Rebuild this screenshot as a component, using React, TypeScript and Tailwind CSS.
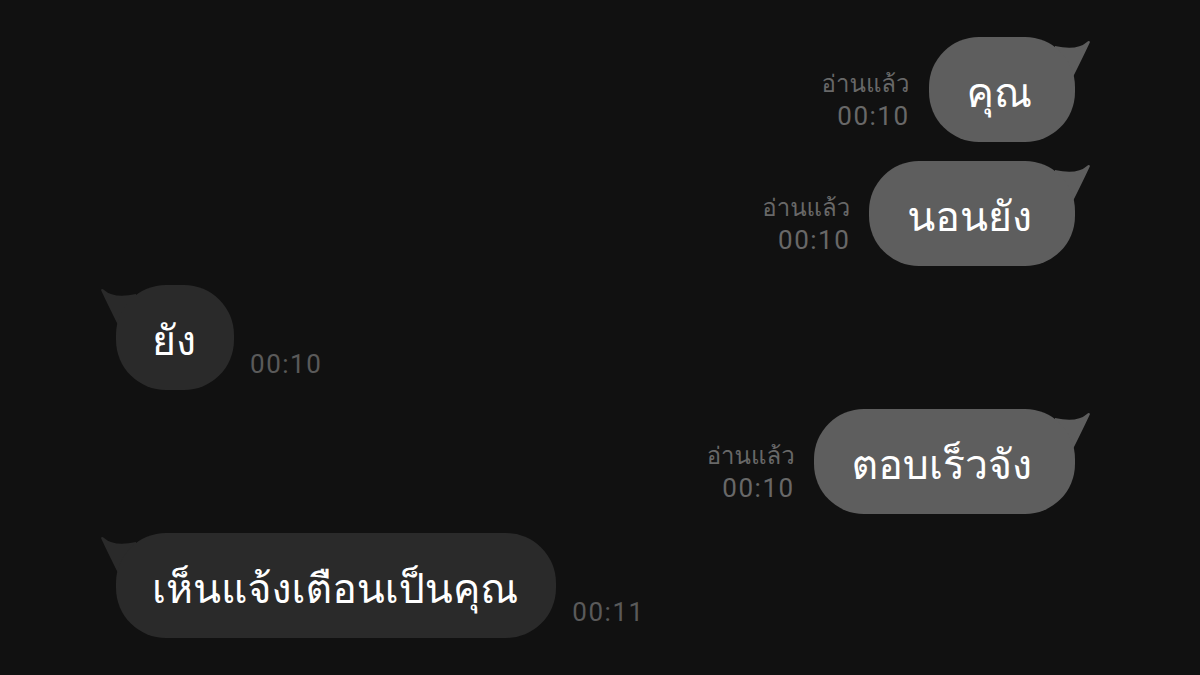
const Tail = ({ side, color }: { side: "left" | "right"; color: string }) => {
  const right = side === "right";
  return (
    <svg
      className={right ? "absolute -right-[16px] top-0" : "absolute -left-[16px] top-0"}
      width="36"
      height="40"
      viewBox="0 0 36 40"
      style={right ? undefined : { transform: "scaleX(-1)" }}
    >
      <path d="M0 9 Q22 14 32 5 Q34 3 35 5 Q30 16 18 40 L0 40 Z" fill={color} />
    </svg>
  );
};

const digits = { fontFamily: "Roboto, Garuda, sans-serif" };

const Out = ({ text, time }: { text: string; time: string }) => (
  <div className="flex items-end justify-end gap-[19px]">
    <div className="mb-[10px] flex flex-col items-end text-[#686868]">
      <span className="text-[24px] leading-[28px]">อ่านแล้ว</span>
      <span className="mt-[2px] text-[26px] leading-[32px] tracking-[1.5px]" style={digits}>
        {time}
      </span>
    </div>
    <div className="relative">
      <Tail side="right" color="#5e5e5e" />
      <div className="relative flex h-[105px] items-center rounded-[50px] bg-[#5e5e5e] pl-[38px] pr-[43px] pt-[6px] text-[41px] text-white">
        {text}
      </div>
    </div>
  </div>
);

const In = ({ text, time }: { text: string; time: string }) => (
  <div className="flex items-end gap-[16px]">
    <div className="relative">
      <Tail side="left" color="#2a2a2a" />
      <div className="relative flex h-[105px] items-center rounded-[50px] bg-[#2a2a2a] pl-[36px] pr-[38px] pt-[6px] text-[41px] text-white">
        {text}
      </div>
    </div>
    <span className="mb-[10px] text-[26px] leading-[32px] tracking-[1.5px] text-[#5a5a5a]" style={digits}>
      {time}
    </span>
  </div>
);

export default function App() {
  return (
    <div
      className="flex h-[675px] w-[1200px] flex-col gap-[19px] overflow-hidden bg-[#111111] pl-[116px] pr-[125px] pt-[37px]"
      style={{ fontFamily: 'Garuda, Loma, "Noto Sans", "Noto Sans Thai", Roboto, sans-serif' }}
    >
      <Out text="คุณ" time="00:10" />
      <Out text="นอนยัง" time="00:10" />
      <div className="flex justify-start">
        <In text="ยัง" time="00:10" />
      </div>
      <Out text="ตอบเร็วจัง" time="00:10" />
      <div className="flex justify-start">
        <In text="เห็นแจ้งเตือนเป็นคุณ" time="00:11" />
      </div>
    </div>
  );
}
